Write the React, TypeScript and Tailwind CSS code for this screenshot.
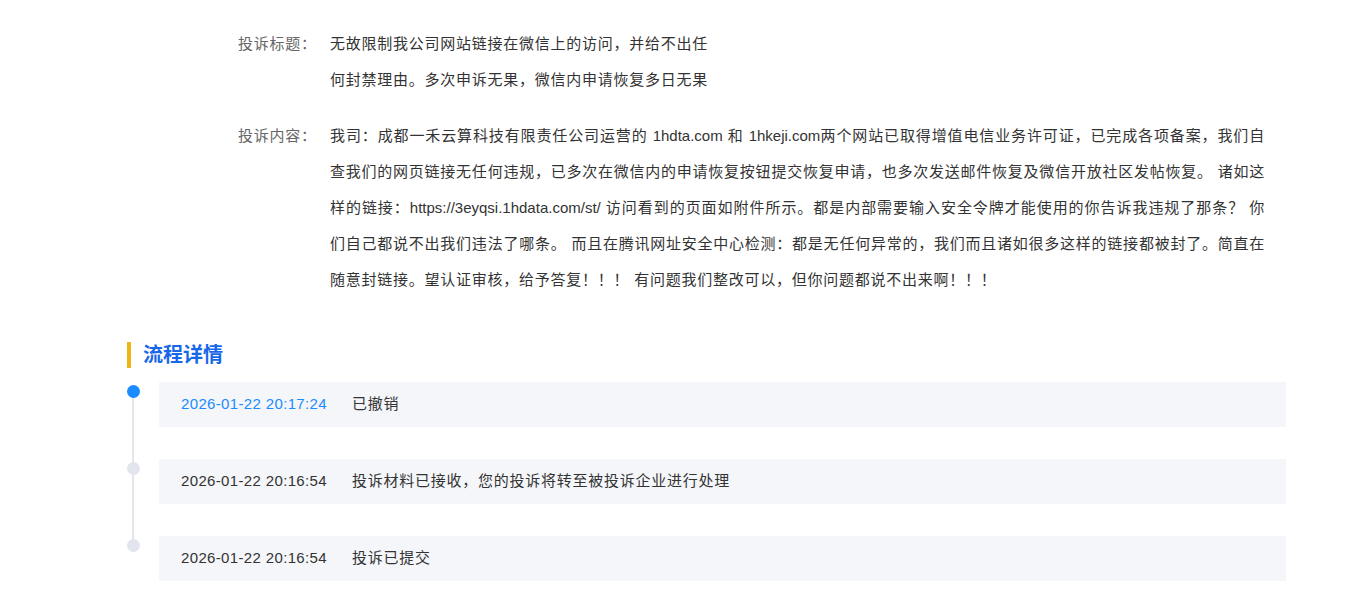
import React from 'react';

const FONT = { fontFamily: '"Liberation Sans", "Noto Sans CJK SC", sans-serif' };

// latin runs sit tighter than the chinese text around them
function L({ children }: { children: React.ReactNode }) {
  return <span className="tracking-normal">{children}</span>;
}

const titleLines: React.ReactNode[] = [
  '无故限制我公司网站链接在微信上的访问，并给不出任',
  '何封禁理由。多次申诉无果，微信内申请恢复多日无果',
];

const contentLines: React.ReactNode[] = [
  <>
    我司：成都一禾云算科技有限责任公司运营的 <L>1hdta.com</L> 和 <L>1hkeji.com</L>
    两个网站已取得增值电信业务许可证，已完成各项备案，我们自
  </>,
  '查我们的网页链接无任何违规，已多次在微信内的申请恢复按钮提交恢复申请，也多次发送邮件恢复及微信开放社区发帖恢复。 诸如这',
  <>
    样的链接：<L>https://3eyqsi.1hdata.com/st/</L> 访问看到的页面如附件所示。都是内部需要输入安全令牌才能使用的你告诉我违规了那条？ 你
  </>,
  '们自己都说不出我们违法了哪条。 而且在腾讯网址安全中心检测：都是无任何异常的，我们而且诸如很多这样的链接都被封了。简直在',
  '随意封链接。望认证审核，给予答复！！！ 有问题我们整改可以，但你问题都说不出来啊！！！',
];

const steps = [
  { time: '2026-01-22 20:17:24', text: '已撤销', active: true },
  { time: '2026-01-22 20:16:54', text: '投诉材料已接收，您的投诉将转至被投诉企业进行处理', active: false },
  { time: '2026-01-22 20:16:54', text: '投诉已提交', active: false },
];

// lines are laid out as in the original, each full line spread to the column width
function Lines({ lines, justifyLast }: { lines: React.ReactNode[]; justifyLast?: boolean }) {
  return (
    <div>
      {lines.map((l, i) => {
        const full = i < lines.length - 1 || justifyLast;
        return (
          <div
            key={i}
            className={full ? 'text-justify [text-align-last:justify] whitespace-nowrap' : 'whitespace-nowrap'}
          >
            {l}
          </div>
        );
      })}
    </div>
  );
}

function InfoRow({ label, children }: { label: string; children: React.ReactNode }) {
  return (
    <div className="flex text-[15px] leading-[36px] tracking-[0.75px]">
      <div className="w-[92px] shrink-0 text-[#666]">{label}</div>
      {children}
    </div>
  );
}

export default function App() {
  return (
    <div className="h-[614px] w-full overflow-hidden bg-white" style={FONT}>
      <div className="pl-[127px] pr-[62px] pt-[26px]">
        <div className="pl-[111px]">
          <InfoRow label="投诉标题：">
            <div className="w-[378px] text-[#333]">
              <Lines lines={titleLines} justifyLast />
            </div>
          </InfoRow>
          <div className="mt-[20px]">
            <InfoRow label="投诉内容：">
              <div className="w-[935px] text-[#333]">
                <Lines lines={contentLines} />
              </div>
            </InfoRow>
          </div>
        </div>

        <div className="mt-[44px] flex h-[26px] items-center">
          <div className="h-[26px] w-[4px] bg-[#f0b50f]" />
          <h2 className="pl-[12px] text-[20px] font-bold leading-[26px] text-[#1767e8]">流程详情</h2>
        </div>

        <div className="relative mt-[14px] flex flex-col gap-[32px]">
          <div className="absolute left-[5px] top-[10px] bottom-[38px] w-[2px] bg-[#e4e6ee]" />
          {steps.map((s, i) => (
            <div key={i} className="flex">
              <div className="w-[32px] shrink-0">
                <div
                  className={
                    'relative mt-[3px] h-[13px] w-[13px] rounded-full ' +
                    (s.active ? 'bg-[#1a8cff]' : 'bg-[#e3e5ee]')
                  }
                />
              </div>
              <div className="flex h-[45px] flex-1 items-center bg-[#f5f6fa] pl-[22px] text-[15px]">
                <span
                  className={
                    'w-[171px] shrink-0 tracking-[0.35px] ' + (s.active ? 'text-[#1a8cff]' : 'text-[#333]')
                  }
                >
                  {s.time}
                </span>
                <span className="tracking-[0.75px] text-[#333]">{s.text}</span>
              </div>
            </div>
          ))}
        </div>
      </div>
    </div>
  );
}
